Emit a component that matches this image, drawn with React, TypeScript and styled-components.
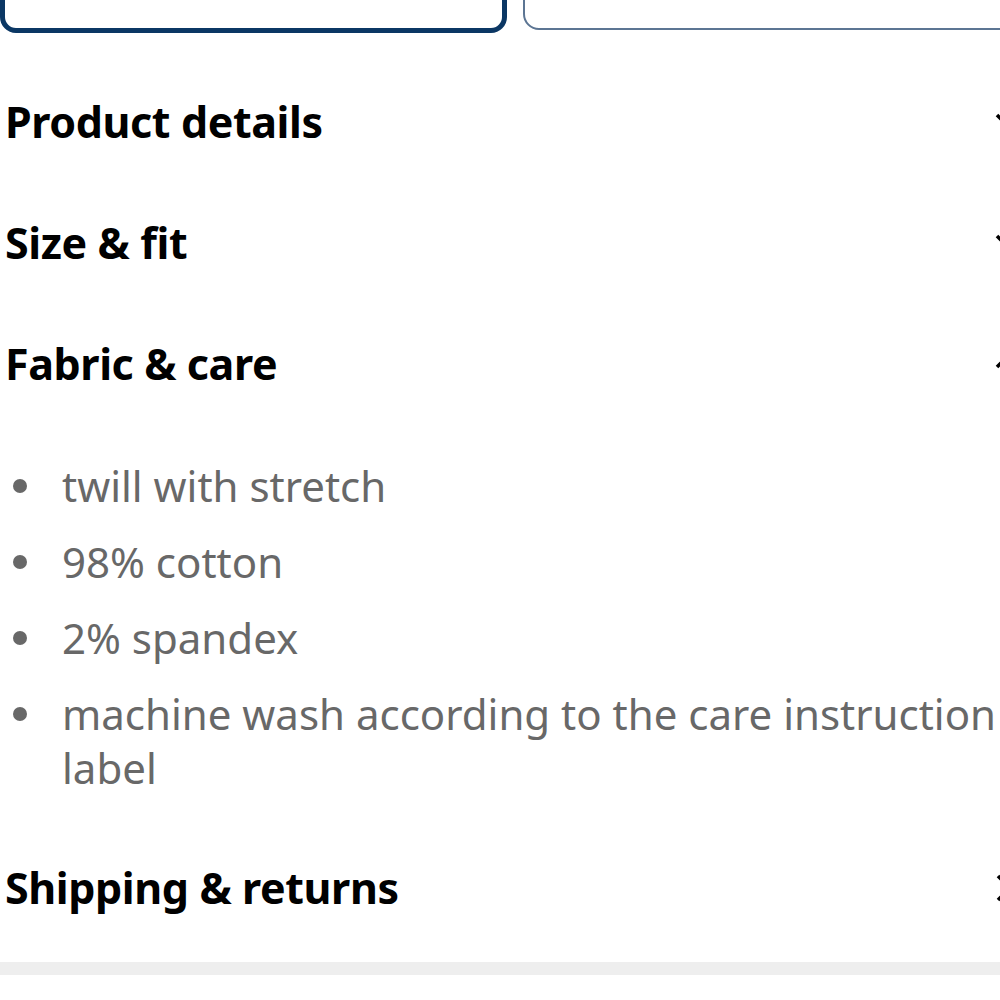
import React from "react";
import styled, { createGlobalStyle } from "styled-components";

const GlobalStyle = createGlobalStyle`
  html, body {
    margin: 0;
    padding: 0;
    background: #ffffff;
    overflow: hidden;
    width: 1000px;
    height: 1000px;
  }
  body {
    font-family: "Noto Sans", "Open Sans", Arial, sans-serif;
  }
`;

type Dir = "down" | "up" | "right";

const sections: { title: string; dir: Dir; items?: string[] }[] = [
  { title: "Product details", dir: "down" },
  { title: "Size & fit", dir: "down" },
  {
    title: "Fabric & care",
    dir: "up",
    items: [
      "twill with stretch",
      "98% cotton",
      "2% spandex",
      "machine wash according to the care instruction label",
    ],
  },
  { title: "Shipping & returns", dir: "right" },
];

function Chevron({ dir }: { dir: Dir }) {
  const d =
    dir === "down"
      ? "M2 7 L12 17 L22 7"
      : dir === "up"
      ? "M2 17 L12 7 L22 17"
      : "M3 2 L15 14 L3 26";
  return (
    <ChevronSvg viewBox="0 0 24 28" width="24" height="28">
      <path d={d} fill="none" stroke="#000" strokeWidth="3.6" strokeLinecap="butt" />
    </ChevronSvg>
  );
}

export default function App() {
  return (
    <>
      <GlobalStyle />
      <Viewport>
        <Page>
          <ButtonRow>
            <OptionButton $selected />
            <OptionButton />
          </ButtonRow>
          <Accordion>
            {sections.map((s) => (
              <Section key={s.title}>
                <Header>
                  <Title>{s.title}</Title>
                  <Chevron dir={s.dir} />
                </Header>
                {s.items && (
                  <List>
                    {s.items.map((it) => (
                      <Item key={it}>
                        <Bullet />
                        <ItemText>{it}</ItemText>
                      </Item>
                    ))}
                  </List>
                )}
              </Section>
            ))}
          </Accordion>
          <Band />
        </Page>
      </Viewport>
    </>
  );
}

const Viewport = styled.div`
  width: 1000px;
  height: 1000px;
  overflow: hidden;
`;

const Page = styled.div`
  width: 1030px;
  display: flex;
  flex-direction: column;
  margin-top: -60px;
`;

const ButtonRow = styled.div`
  display: flex;
  gap: 16px;
`;

const OptionButton = styled.div<{ $selected?: boolean }>`
  flex: none;
  box-sizing: border-box;
  height: ${(p) => (p.$selected ? "93px" : "90px")};
  width: ${(p) => (p.$selected ? "507px" : "600px")};
  border: ${(p) => (p.$selected ? "5px solid #0b3764" : "2.5px solid #5c7593")};
  border-radius: 16px;
  background: #fff;
`;

const Accordion = styled.div`
  display: flex;
  flex-direction: column;
  padding: 28px 11px 0 5px;
`;

const Section = styled.div`
  display: flex;
  flex-direction: column;
`;

const Header = styled.div`
  height: 121px;
  display: flex;
  align-items: center;
  justify-content: space-between;
`;

const Title = styled.h2`
  margin: 0;
  font-family: "Noto Sans", "Open Sans", Arial, sans-serif;
  font-weight: 700;
  font-size: 43px;
  color: #000;
  letter-spacing: -0.4px;
`;

const ChevronSvg = styled.svg`
  flex: none;
`;

const List = styled.ul`
  list-style: none;
  margin: 0;
  padding: 35px 8px 32px 8px;
  display: flex;
  flex-direction: column;
  gap: 22px;
`;

const Item = styled.li`
  display: flex;
  align-items: flex-start;
`;

const Bullet = styled.span`
  flex: none;
  width: 14px;
  height: 14px;
  border-radius: 50%;
  background: #686868;
  margin-top: 20px;
  margin-right: 35px;
`;

const ItemText = styled.span`
  font-size: 42px;
  line-height: 54px;
  color: #686868;
`;

const Band = styled.div`
  margin-top: 14px;
  height: 13px;
  background: #eeeeee;
`;
